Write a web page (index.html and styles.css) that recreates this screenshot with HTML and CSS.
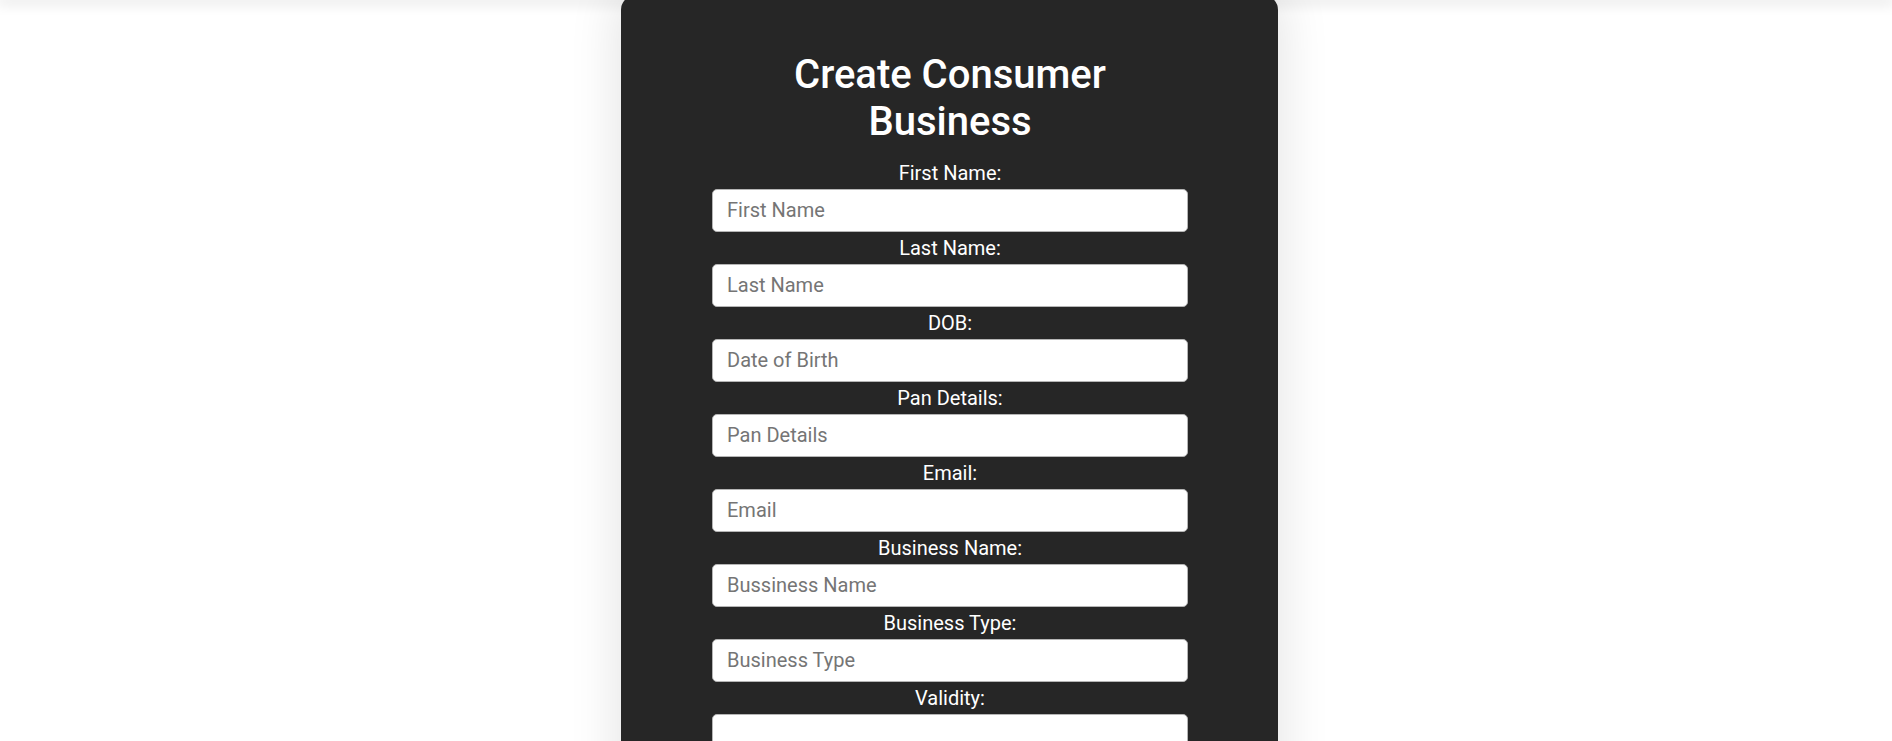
FILE: index.html
```html
<!DOCTYPE html>
<html lang="en">
<head>
<meta charset="utf-8">
<title>Create Consumer Business</title>
<link rel="stylesheet" href="styles.css">
</head>
<body>
<div class="topbar"></div>
<main class="page">
  <section class="card">
    <h1 class="title">Create Consumer Business</h1>
    <form class="form">
      <label class="label" for="fn">First Name:</label>
      <input class="input" id="fn" type="text" placeholder="First Name">
      <label class="label" for="ln">Last Name:</label>
      <input class="input" id="ln" type="text" placeholder="Last Name">
      <label class="label" for="dob">DOB:</label>
      <input class="input" id="dob" type="text" placeholder="Date of Birth">
      <label class="label" for="pan">Pan Details:</label>
      <input class="input" id="pan" type="text" placeholder="Pan Details">
      <label class="label" for="em">Email:</label>
      <input class="input" id="em" type="text" placeholder="Email">
      <label class="label" for="bn">Business Name:</label>
      <input class="input" id="bn" type="text" placeholder="Bussiness Name">
      <label class="label" for="bt">Business Type:</label>
      <input class="input" id="bt" type="text" placeholder="Business Type">
      <label class="label" for="val">Validity:</label>
      <input class="input" id="val" type="text">
    </form>
  </section>
</main>
</body>
</html>
```
FILE: styles.css
```css
html, body {
  margin: 0;
  padding: 0;
  background: #ffffff;
  font-family: Roboto, "Liberation Sans", sans-serif;
}

.topbar {
  height: 0;
  box-shadow: 0 0 14px 3px rgba(0, 0, 0, 0.14);
}

.page {
  display: flex;
  justify-content: center;
  padding-left: 7px;
  margin-top: -5px;
}

.card {
  width: 657px;
  box-sizing: border-box;
  background: #262626;
  border-radius: 15px;
  padding: 56px 90px 40px 91px;
  box-shadow: 0 0 50px 4px rgba(0, 0, 0, 0.11);
  color: #ffffff;
}

.title {
  margin: 0 0 15.6px;
  font-size: 40px;
  font-weight: 500;
  line-height: normal;
  text-align: center;
}

.form {
  display: flex;
  flex-direction: column;
  align-items: stretch;
}

.label {
  display: block;
  text-align: center;
  font-size: 20px;
  line-height: normal;
  color: #ffffff;
}

.input {
  display: block;
  margin: 4px 0;
  height: 43px;
  box-sizing: border-box;
  padding: 0 14px;
  border: 1px solid #b5b5b5;
  border-radius: 5px;
  background: #ffffff;
  font-family: Roboto, "Liberation Sans", sans-serif;
  font-size: 20px;
  color: #222;
  outline: none;
}

.input::placeholder {
  color: #757575;
}
```
